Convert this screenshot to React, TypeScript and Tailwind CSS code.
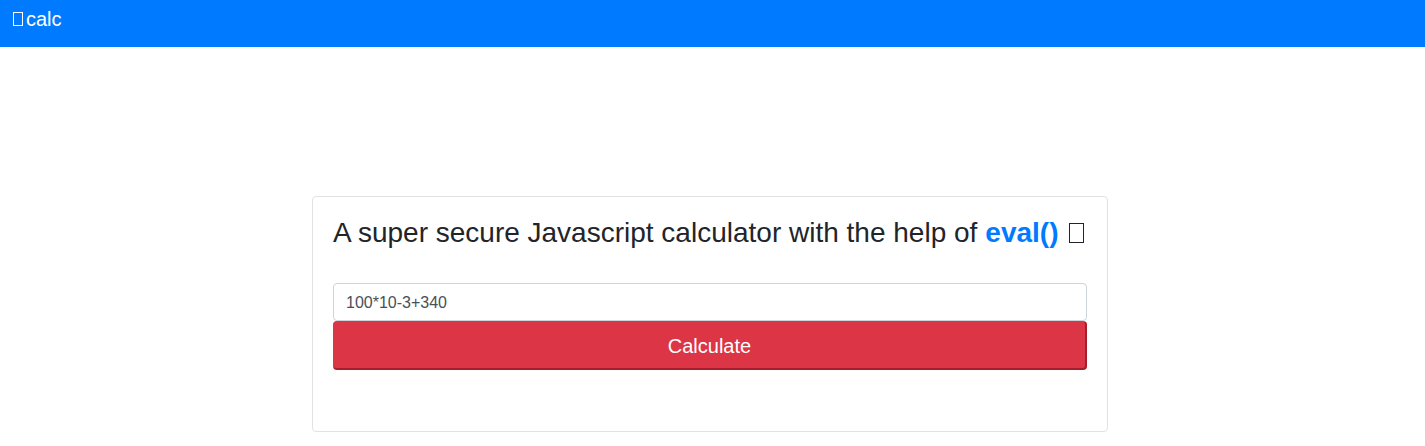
import React from "react";

export default function App() {
  return (
    <div className="min-h-[446px] bg-white" style={{ fontFamily: '"Liberation Sans", Arial, sans-serif' }}>
      <nav className="h-[47px] bg-[#007bff] flex items-start pl-[13px] pt-[7px]">
        <span className="flex items-center text-white text-[20px] leading-[24px]">
          <span className="inline-block w-[10px] h-[14px] border border-white mr-[3px]" />
          calc
        </span>
      </nav>
      <div className="pt-[149px] pl-[312px]">
        <div className="w-[796px] h-[236px] border border-[#e2e2e2] rounded-[4px] px-[20px] pt-[19px]">
          <h3 className="text-[28px] leading-[34px] text-[#212529] flex items-center">
            <span>A super secure Javascript calculator with the help of </span>
            <b className="text-[#007bff] ml-[8px]">eval()</b>
            <span className="inline-block w-[15px] h-[20px] border-[1.5px] border-[#212529] ml-[11px]" />
          </h3>
          <div className="mt-[33px]">
            <input
              readOnly
              value="100*10-3+340"
              className="block w-full h-[38px] border border-[#ced4da] rounded-[4px] px-[12px] pt-[2px] text-[16px] text-[#495057] outline-none"
              style={{ fontFamily: '"Liberation Sans", Arial, sans-serif' }}
            />
            <button
              className="block w-full h-[49px] bg-[#dc3545] text-white text-[20px] rounded-[4px] border-l border-t border-[#dc3545] border-r-2 border-b-2 border-r-[#a71d2a] border-b-[#a71d2a] pt-[2px]"
              style={{ fontFamily: '"Liberation Sans", Arial, sans-serif' }}
            >
              Calculate
            </button>
          </div>
        </div>
      </div>
    </div>
  );
}
